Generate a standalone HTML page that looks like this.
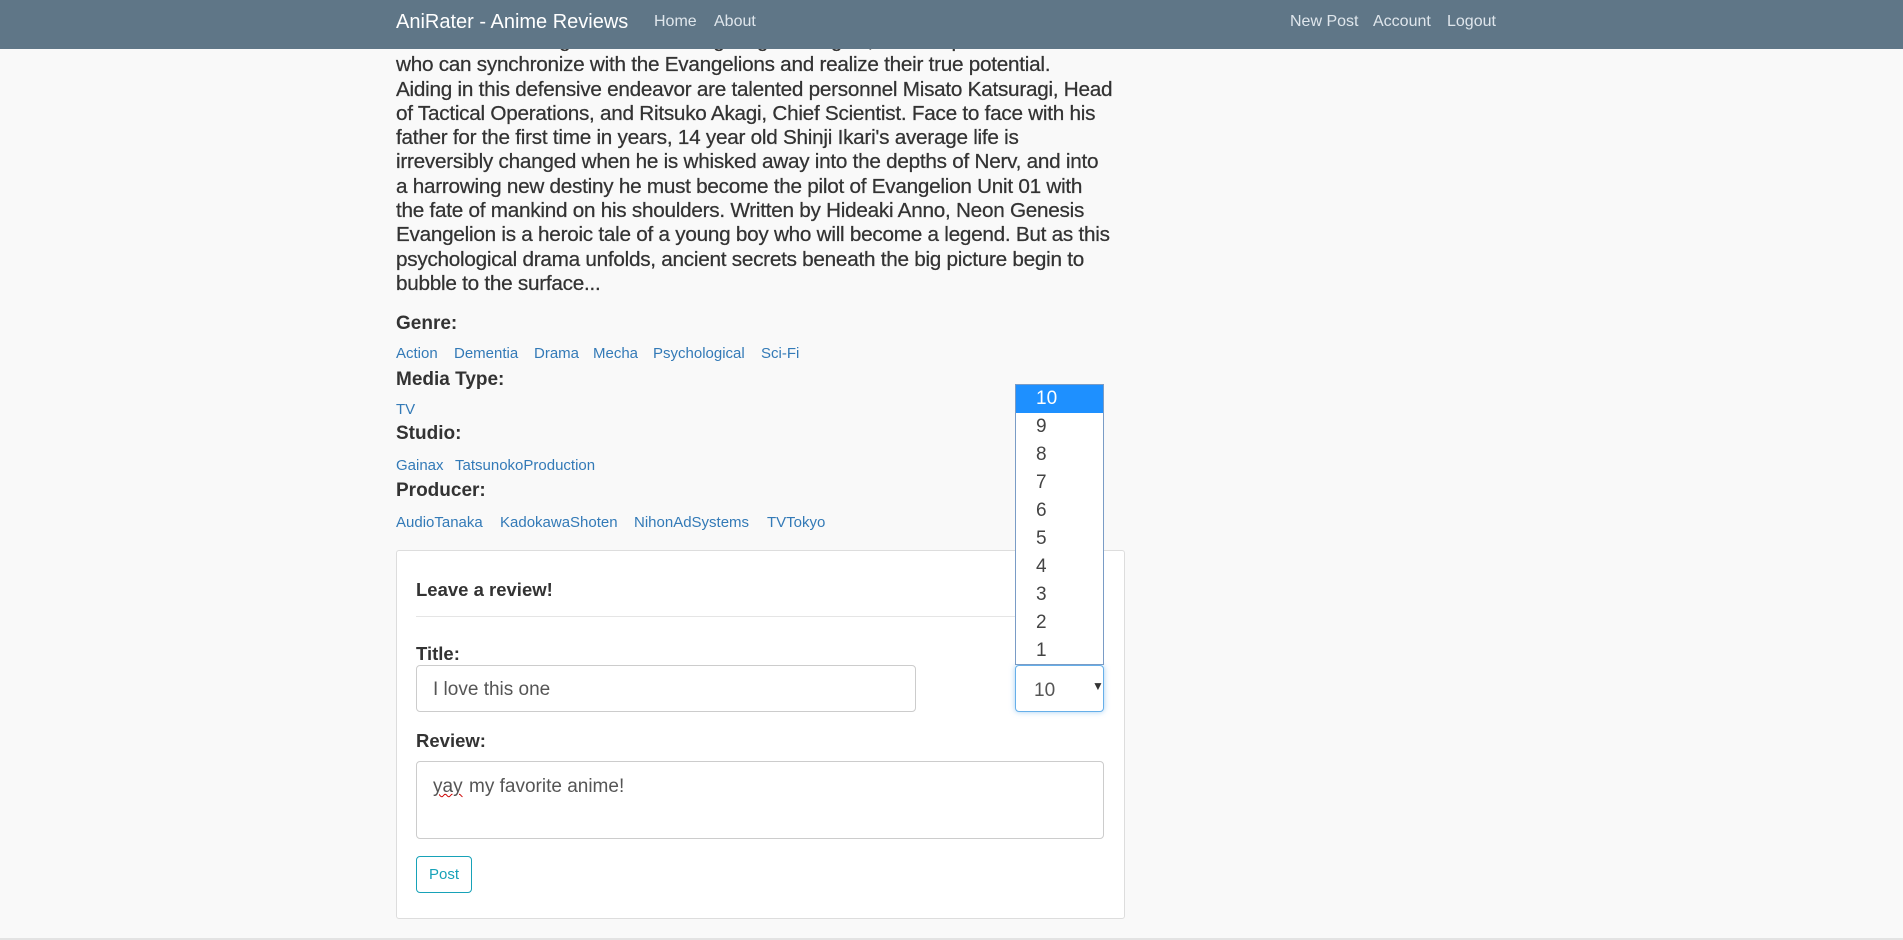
<!DOCTYPE html>
<html><head><style>
*{box-sizing:border-box;margin:0;padding:0}
body{width:1903px;height:940px;overflow:hidden;background:#f9f9f9;font-family:"Liberation Sans",sans-serif;color:#333;position:relative}
.nav{position:absolute;left:0;top:0;width:1903px;height:49px;background:#5f7687;z-index:5}
.nav span{position:absolute;top:13px;color:#dfe6ec;font-size:16px;white-space:nowrap}
.nav .brand{color:#fff;font-size:20px;top:11px;left:396px}
.desc{position:absolute;left:396px;top:29px;font-size:20.7px;line-height:24.3px;white-space:nowrap;color:#333;letter-spacing:-0.25px;-webkit-text-stroke:0.25px #333}
.lbl{position:absolute;left:396px;font-size:19px;font-weight:bold;color:#333;white-space:nowrap}
.lnk{position:absolute;font-size:15px;color:#337ab7;white-space:nowrap}
.card{position:absolute;left:396px;top:550px;width:729px;height:369px;background:#fff;border:1px solid #ddd;border-radius:3px}
.abs{position:absolute;white-space:nowrap}
.inp{position:absolute;background:#fff;border:1px solid #ccc;border-radius:4px}
</style></head><body>
<div class="nav">
<span class="brand">AniRater - Anime Reviews</span>
<span style="left:654px">Home</span>
<span style="left:714px">About</span>
<span style="left:1290px">New Post</span>
<span style="left:1373px">Account</span>
<span style="left:1447px">Logout</span>
</div>
<div class="desc">Nerv is a secret organization investigating the Angels, and the pilots chosen<br>who can synchronize with the Evangelions and realize their true potential.<br>Aiding in this defensive endeavor are talented personnel Misato Katsuragi, Head<br>of Tactical Operations, and Ritsuko Akagi, Chief Scientist. Face to face with his<br>father for the first time in years, 14 year old Shinji Ikari's average life is<br>irreversibly changed when he is whisked away into the depths of Nerv, and into<br>a harrowing new destiny he must become the pilot of Evangelion Unit 01 with<br>the fate of mankind on his shoulders. Written by Hideaki Anno, Neon Genesis<br>Evangelion is a heroic tale of a young boy who will become a legend. But as this<br>psychological drama unfolds, ancient secrets beneath the big picture begin to<br>bubble to the surface...</div>

<div class="lbl" style="top:313px">Genre:</div>
<span class="lnk" style="left:396px;top:345px">Action</span>
<span class="lnk" style="left:454px;top:345px">Dementia</span>
<span class="lnk" style="left:534px;top:345px">Drama</span>
<span class="lnk" style="left:593px;top:345px">Mecha</span>
<span class="lnk" style="left:653px;top:345px">Psychological</span>
<span class="lnk" style="left:761px;top:345px">Sci-Fi</span>
<div class="lbl" style="top:369px">Media Type:</div>
<span class="lnk" style="left:396px;top:401px">TV</span>
<div class="lbl" style="top:423px">Studio:</div>
<span class="lnk" style="left:396px;top:457px">Gainax</span>
<span class="lnk" style="left:455px;top:457px">TatsunokoProduction</span>
<div class="lbl" style="top:480px">Producer:</div>
<span class="lnk" style="left:396px;top:514px">AudioTanaka</span>
<span class="lnk" style="left:500px;top:514px">KadokawaShoten</span>
<span class="lnk" style="left:634px;top:514px">NihonAdSystems</span>
<span class="lnk" style="left:767px;top:514px">TVTokyo</span>

<div class="card"></div>
<div class="abs" style="left:416px;top:579px;font-size:18.5px;font-weight:bold">Leave a review!</div>
<div class="abs" style="left:416px;top:616px;width:688px;height:1px;background:#e5e5e5"></div>
<div class="abs" style="left:416px;top:643px;font-size:18.5px;font-weight:bold">Title:</div>
<div class="inp" style="left:416px;top:665px;width:500px;height:47px"><span class="abs" style="left:16px;top:13px;font-size:19px;color:#555">I love this one</span></div>
<div class="inp" style="left:1015px;top:665px;width:89px;height:47px;border-color:#66afe9;box-shadow:0 0 6px rgba(102,175,233,.6)"><span class="abs" style="left:18px;top:14px;font-size:19px;color:#555">10</span><span class="abs" style="left:76px;top:13px;font-size:12px;color:#333">▼</span></div>
<div class="abs" style="left:416px;top:730px;font-size:18.5px;font-weight:bold">Review:</div>
<div class="inp" style="left:416px;top:761px;width:688px;height:78px"><span class="abs" style="left:16px;top:14px;font-size:19px;color:#555;text-decoration:underline wavy #c00;text-decoration-thickness:1px">yay</span><span class="abs" style="left:52px;top:14px;font-size:19px;color:#555">my favorite anime!</span></div>
<div class="abs" style="left:416px;top:856px;width:56px;height:37px;border:1px solid #17a2b8;border-radius:4px;color:#17a2b8;font-size:15px;text-align:center;line-height:35px;background:#fff">Post</div>

<div class="abs" style="left:1015px;top:384px;width:89px;height:281px;background:#fff;border:1px solid #7a9cc6;font-size:19px;color:#444">
<div style="height:28px;background:#1e90ff;color:#fff;padding-left:20px;line-height:28px">10</div>
<div style="height:28px;padding-left:20px;line-height:28px">9</div>
<div style="height:28px;padding-left:20px;line-height:28px">8</div>
<div style="height:28px;padding-left:20px;line-height:28px">7</div>
<div style="height:28px;padding-left:20px;line-height:28px">6</div>
<div style="height:28px;padding-left:20px;line-height:28px">5</div>
<div style="height:28px;padding-left:20px;line-height:28px">4</div>
<div style="height:28px;padding-left:20px;line-height:28px">3</div>
<div style="height:28px;padding-left:20px;line-height:28px">2</div>
<div style="height:28px;padding-left:20px;line-height:28px">1</div>
</div>
<div class="abs" style="left:0;top:938px;width:1903px;height:2px;background:#e3e3e3"></div>
</body></html>
